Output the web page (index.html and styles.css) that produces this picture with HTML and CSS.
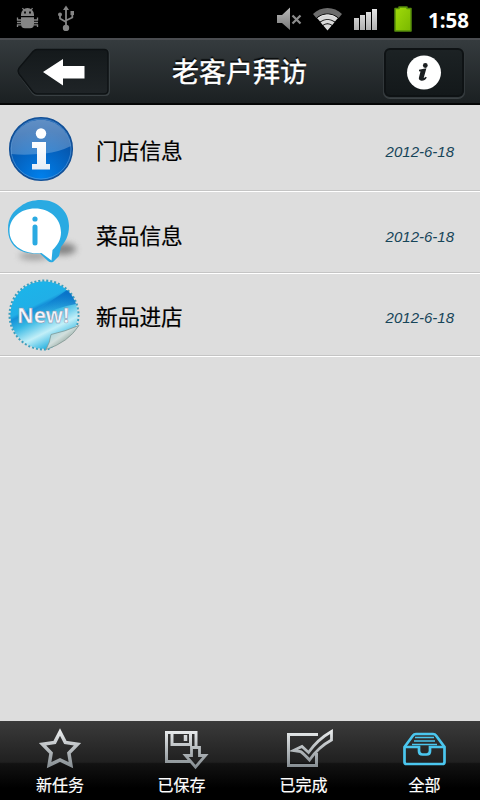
FILE: index.html
```html
<!DOCTYPE html>
<html lang="zh-CN">
<head>
<meta charset="utf-8">
<title>老客户拜访</title>
<link rel="stylesheet" href="styles.css">
</head>
<body>
<div class="screen">
  <div class="status">
    <svg class="bug" width="24" height="24" viewBox="16 6 24 24" fill="#858585">
      <path d="M21 16v-1.500a6.500 6.500 0 0 1 13 0V16zM21 17.200h13v7a4 4 0 0 1-4 4h-5a4 4 0 0 1-4-4z"/>
      <path d="M22.500 8l2 3M32.500 8l-2 3M21 20h-3.500v-2.500M34 20h3.500v-2.500M21 22.500h-4M34 22.500h4M21 24.800h-3.500V27M34 24.800h3.500V27" fill="none" stroke="#858585" stroke-width="1.300"/>
      <path d="M24 11.500h2v2h-2zM29 11.500h2v2h-2z" fill="#111"/>
    </svg>
    <svg class="usb" width="18" height="26" viewBox="57 5 18 26" fill="#858585">
      <path d="M66 5.500l3 4.500h-6z"/><circle cx="66" cy="28" r="3.200"/><circle cx="60" cy="14.500" r="2"/><path d="M70.500 11h3.500v4h-3.500z"/>
      <path d="M66 9v18M60 15v3.500l6 3.500M72.300 14v3.500L66 20.500" fill="none" stroke="#858585" stroke-width="1.800"/>
    </svg>
    <svg class="mute" width="26" height="24" viewBox="276 7 26 24">
      <defs><linearGradient id="silver" x2="0" y2="1"><stop stop-color="#bbb"/><stop offset="1" stop-color="#777"/></linearGradient></defs>
      <path d="M277 15h5l8-7.500v22.500l-8-7h-5z" fill="url(#silver)"/>
      <path d="M292.500 15.500l8 8M300.500 15.500l-8 8" stroke="#8d8d8d" stroke-width="2.200"/>
    </svg>
    <svg class="wifi" width="30" height="24" viewBox="312 7 30 24">
      <path d="M313 14a20.500 20.500 0 0 1 29 0l-3.300 4a16 16 0 0 0-22.400 0z" fill="#6d6d6d"/>
      <path d="M317.500 18.400a15.500 15.500 0 0 1 20 0l-2.500 3.200a12 12 0 0 0-15 0zM320.500 22.200a11 11 0 0 1 14 0l-2.200 2.800a8 8 0 0 0-9.600 0zM323.300 25.600a7.500 7.500 0 0 1 8.400 0L327.500 30.500z" fill="#d9d9d9"/>
      <path d="M317.500 18.400a15.500 15.500 0 0 1 20 0" fill="none" stroke="#f1f1f1"/>
    </svg>
    <svg class="signal" width="26" height="24" viewBox="353 7 26 24">
      <defs><linearGradient id="bars" x2="0" y2="1"><stop stop-color="#e6e6e6"/><stop offset="1" stop-color="#b0b0b0"/></linearGradient></defs>
      <path d="M354 18h5v12h-5zM360 15h5v15h-5zM366 12h5v18h-5zM372 9h5v21h-5z" fill="url(#bars)"/>
    </svg>
    <svg class="battery" width="24" height="32" viewBox="391 3 24 32">
      <defs><linearGradient id="cell" x2="1" y2="1"><stop stop-color="#a1db0a"/><stop offset="1" stop-color="#79b800"/></linearGradient></defs>
      <path d="M395 8.500h4V7h8v1.500h4V31h-16z" fill="url(#cell)" stroke="#568c0d" stroke-width="1.500" stroke-linejoin="round"/>
    </svg>
    <span class="clock">1:58</span>
  </div>

  <header class="header">
    <svg class="back" width="96" height="52" viewBox="16 47 96 52">
      <defs><linearGradient id="well" x2="0" y2="1"><stop stop-color="#14191b"/><stop offset="1" stop-color="#1f2427"/></linearGradient></defs>
      <path d="M37 50h68q4 0 4 4v37q0 4-4 4H37q-2 0-4-2L19 74q-2-3 0-6l14-16q2-2 4-2z" fill="none" stroke="#394043" stroke-width="2"/>
      <path d="M37 49.500h67q4 0 4 4v36.500q0 4-4 4H37q-2 0-4-2L19 74q-2-3 0-6l14-16.500q2-2 4-2z" fill="url(#well)" stroke="#0e1214" stroke-width="1.500"/>
      <path d="M43 72l20-13v7h21.500v12.500H63v7z" fill="#fff"/>
    </svg>
    <h1 class="title">老客户拜访</h1>
    <div class="info">
      <svg width="36" height="36" viewBox="405 55 36 36">
        <circle cx="423" cy="72.500" r="17" fill="#fff"/>
        <circle cx="424.300" cy="65.500" r="2.400" fill="#1b1f21"/>
        <path d="M418 69.700q3.500-.8 7.400-1.500l-2.700 9.800q1.300-.3 2-1.300l1.100.7q-2 3.500-5.300 3.300-3.400-.4-2.500-3.400l1.500-5.700-1.500-.4z" fill="#1b1f21"/>
      </svg>
    </div>
  </header>

  <main class="list">
    <div class="row first">
      <svg class="icon" width="80" height="80" viewBox="4 109 80 80">
        <defs>
          <radialGradient id="orb" cx=".5" cy=".95" r=".75"><stop stop-color="#0080ec"/><stop offset="1" stop-color="#0750a4"/></radialGradient>
          <linearGradient id="gloss" x2="0" y2="1"><stop stop-color="#fff" stop-opacity=".36"/><stop offset="1" stop-color="#fff" stop-opacity=".22"/></linearGradient>
          <linearGradient id="glyph" x2="0" y2="1"><stop stop-color="#fff"/><stop offset="1" stop-color="#e4edf6"/></linearGradient>
        </defs>
        <circle cx="41" cy="149" r="31.300" fill="url(#orb)" stroke="#125097" stroke-width="1.500"/>
        <path d="M11 154a30 30 0 1 1 60-8q-12 6-26 7.500-19 2-34 .5z" fill="url(#gloss)"/>
        <circle cx="41" cy="149" r="30" fill="none" stroke="#6ca5dc" stroke-opacity=".55"/>
        <circle cx="41" cy="133.500" r="5.200" fill="#fff"/>
        <path d="M32 142h14v22h4v5.500H32V164h5v-16h-5z" fill="url(#glyph)"/>
      </svg>
      <span class="name">门店信息</span><span class="date">2012-6-18</span>
    </div>
    <div class="row second">
      <svg class="icon" width="80" height="80" viewBox="4 194 80 80">
        <defs><filter id="soft" x="-50%" y="-100%" width="200%" height="300%"><feGaussianBlur stdDeviation="3"/></filter></defs>
        <ellipse cx="63" cy="249" rx="13" ry="6" fill="#555" opacity=".65" filter="url(#soft)"/>
        <ellipse cx="34" cy="256" rx="15" ry="4" fill="#777" opacity=".6" filter="url(#soft)"/>
        <path d="M8 229c0-11 5-18 13-23 5-4 12-6 20-6 16 0 28 11 28 26 0 10-4 16-8 21l-2 9-6 6q-3 1-5-1l-8-7.500C22 255 8 247 8 229z" fill="#2aaae2"/>
        <path d="M35 208.500c15 0 26 10 26 24 0 7-3.500 13-8.500 17.500l-1 10.500-10-7.500c-18 2-32-8-32-22 0-13 11-22.500 25.500-22.500z" fill="#fff"/>
        <circle cx="35" cy="219" r="2.600" fill="#2aaae2"/><rect x="32.500" y="224.500" width="5" height="21" rx="2.500" fill="#2aaae2"/>
      </svg>
      <span class="name">菜品信息</span><span class="date">2012-6-18</span>
    </div>
    <div class="row third">
      <svg class="icon" width="80" height="80" viewBox="4 275 80 80">
        <defs>
          <linearGradient id="seal" x1=".25" y1=".05" x2=".7" y2=".95"><stop stop-color="#1cb4e9"/><stop offset=".32" stop-color="#20afe7"/><stop offset=".37" stop-color="#1590d8"/><stop offset=".52" stop-color="#36b8e4"/><stop offset=".75" stop-color="#c2eff8"/><stop offset="1" stop-color="#13aadd"/></linearGradient>
          <linearGradient id="shade" x1="0" y1="1" x2="1" y2="0"><stop offset=".35" stop-color="#0875cc" stop-opacity="0"/><stop offset="1" stop-color="#0569c3"/></linearGradient>
          <linearGradient id="curl" x2="1" y2="1"><stop stop-color="#7fc9d7"/><stop offset=".45" stop-color="#d2dfdd"/><stop offset=".6" stop-color="#a9bbb5"/><stop offset="1" stop-color="#f3f5f0"/></linearGradient>
          <clipPath id="peel"><path d="M4 275h80v49L46 352l-2 3H4z"/></clipPath>
        </defs>
        <g clip-path="url(#peel)">
          <circle cx="44" cy="315" r="34" fill="none" stroke="#3c9fbd" stroke-width="3" stroke-dasharray="2 1.956"/>
          <circle cx="44" cy="315" r="33.700" fill="url(#seal)"/>
          <path d="M20 323Q42 307 67 290q6 5 9 14-19 3-37 13z" fill="url(#shade)"/>
        </g>
        <path d="M46 349.500q4-7 5-15 14-3 28-9-11 17-33 24z" fill="url(#curl)" stroke="#7b8f8c" stroke-width=".7"/>
        <text class="new" x="17" y="322.500" textLength="52" lengthAdjust="spacingAndGlyphs">New!</text>
      </svg>
      <span class="name">新品进店</span><span class="date">2012-6-18</span>
    </div>
  </main>

  <nav class="tabs">
    <a class="tab t1">
      <svg width="50" height="44" viewBox="35 726 50 44">
        <defs><linearGradient id="metal" gradientUnits="userSpaceOnUse" x1="0" y1="728" x2="0" y2="770"><stop stop-color="#f0f2f3"/><stop offset="1" stop-color="#7e868b"/></linearGradient></defs>
        <path d="M60 732l5.300 10.400 12.200 1.800-8.600 8.800 2 12.200L60 760l-10.900 5.200 2-12.200-8.600-8.800 12.200-1.800z" fill="none" stroke="url(#metal)" stroke-width="3.500"/>
      </svg><span>新任务</span>
    </a>
    <a class="tab t2">
      <svg width="50" height="44" viewBox="160 726 50 44" fill="none" stroke="url(#metal)" stroke-width="3">
        <path d="M191 761.500h-24.500v-29H196V749"/><path d="M172 733v11.500h18.500V733"/><path d="M185.500 735v6" stroke-width="3.500"/>
        <path d="M191.500 747.500h8v8h6L195.500 767l-10-11.500h6z" stroke-width="2.800"/>
      </svg><span>已保存</span>
    </a>
    <a class="tab t3">
      <svg width="52" height="44" viewBox="283 726 52 44" fill="none" stroke="url(#metal)" stroke-width="3">
        <path d="M318 734.500h-29.500v31H316.500V753"/>
        <path d="M293.500 750.500l8.500-4 6.500 6q9-13 23-21v8.500q-13 7-22 20-6-6.500-9-8.500z" stroke-width="2.800"/>
      </svg><span>已完成</span>
    </a>
    <a class="tab t4">
      <svg width="50" height="44" viewBox="399 726 50 44" fill="none" stroke="#4bc6ee" stroke-width="2.700">
        <path d="M403.500 747l8.500-11.500q1-1.500 3-1.500h17q2 0 3 1.500l8.500 11.500v15q0 2-2 2h-36q-2 0-2-2z"/>
        <path d="M403.500 747H418v4q0 3.500 3.500 3.500h4q3.500 0 3.500-3.500v-4h14.500"/>
        <path d="M414 737.500h19M413 741h21M411 744.500h25" stroke-width="1.600"/>
      </svg><span>全部</span>
    </a>
  </nav>
</div>
</body>
</html>
```
FILE: styles.css
```css
* { box-sizing: border-box; }
body {
  margin: 0;
  font-family: "Liberation Sans", "Noto Sans CJK SC", sans-serif;
  background: #ddd;
}
svg { display: block; flex: none; }
.screen { width: 480px; height: 800px; display: flex; flex-direction: column; background: #ddd; }

.status { height: 38px; flex: none; background: #000; display: flex; align-items: flex-start; padding: 0 0 0 16px; }
.bug { margin-top: 6px; }
.usb { margin: 5px 0 0 17px; }
.mute { margin: 7px 0 0 201px; }
.wifi { margin: 7px 0 0 10px; }
.signal { margin: 7px 0 0 11px; }
.battery { margin: 3px 0 0 12px; }
.clock { margin: 6px 0 0 13px; font: bold 20.500px/28px "Open Sans", sans-serif; color: #fff; }

.header {
  height: 67px; flex: none; display: flex; align-items: flex-start; padding: 7px 15px 0 16px;
  background: linear-gradient(#353b3e, #1b2022);
  border-top: 2px solid #4a4c50; border-bottom: 2px solid #050606;
}
.title {
  margin: 4px 0 0 60px; width: 137px; white-space: nowrap;
  font: 400 27px/40px "Noto Sans CJK SC", sans-serif;
  color: #fff; -webkit-text-stroke: .4px #fff; text-shadow: 0 -2px 1px #080a0b;
}
.info {
  width: 80px; height: 49px; margin: 1px 0 0 75px;
  display: flex; align-items: center; justify-content: center;
  background: linear-gradient(#1c2224, #13181a);
  border: 2px solid #0e1214; border-radius: 6px;
  box-shadow: 0 0 0 1px #32383b, 0 1px 0 1px #3b4144;
}
.info svg { margin-left: -1px; }

.list { flex: 1; display: flex; flex-direction: column; }
.row { display: flex; align-items: flex-start; padding: 0 26px 0 4px; border-bottom: 1px solid #fff; box-shadow: inset 0 -1px 0 #c4c4c4; }
.first { height: 87px; padding-top: 4px; }
.second { height: 82px; padding-top: 2px; }
.third { height: 83px; padding-top: 1px; }
.row .icon { margin-bottom: -6px; }
.name { margin: 25px 0 0 12px; font: 400 21.700px/32px "Noto Sans CJK SC", sans-serif; color: #000; -webkit-text-stroke: .2px #000; }
.date { margin: 33px 0 0 auto; font: italic 15px/20px "Liberation Sans", sans-serif; color: #174559; }
.new { font: bold 21px "Noto Sans", sans-serif; fill: #f4f5fb; stroke: #8590a8; stroke-width: .5px; }

.tabs {
  height: 79px; flex: none; display: grid; grid-template-columns: 120px 123px 121px 116px;
  background: linear-gradient(#3b3b3b 0, #202020 52%, #121212 54%, #000 85%);
}
.tab { display: flex; flex-direction: column; align-items: center; padding-top: 5px; color: #fff; font: 400 16px/24px "Noto Sans CJK SC", sans-serif; -webkit-text-stroke: .2px #fff; }
.tab span { margin-top: 2px; }
.t2 svg { position: relative; left: 3px; }
.t3 svg { position: relative; left: 5px; }
.t4 { padding-left: 5px; }
```
